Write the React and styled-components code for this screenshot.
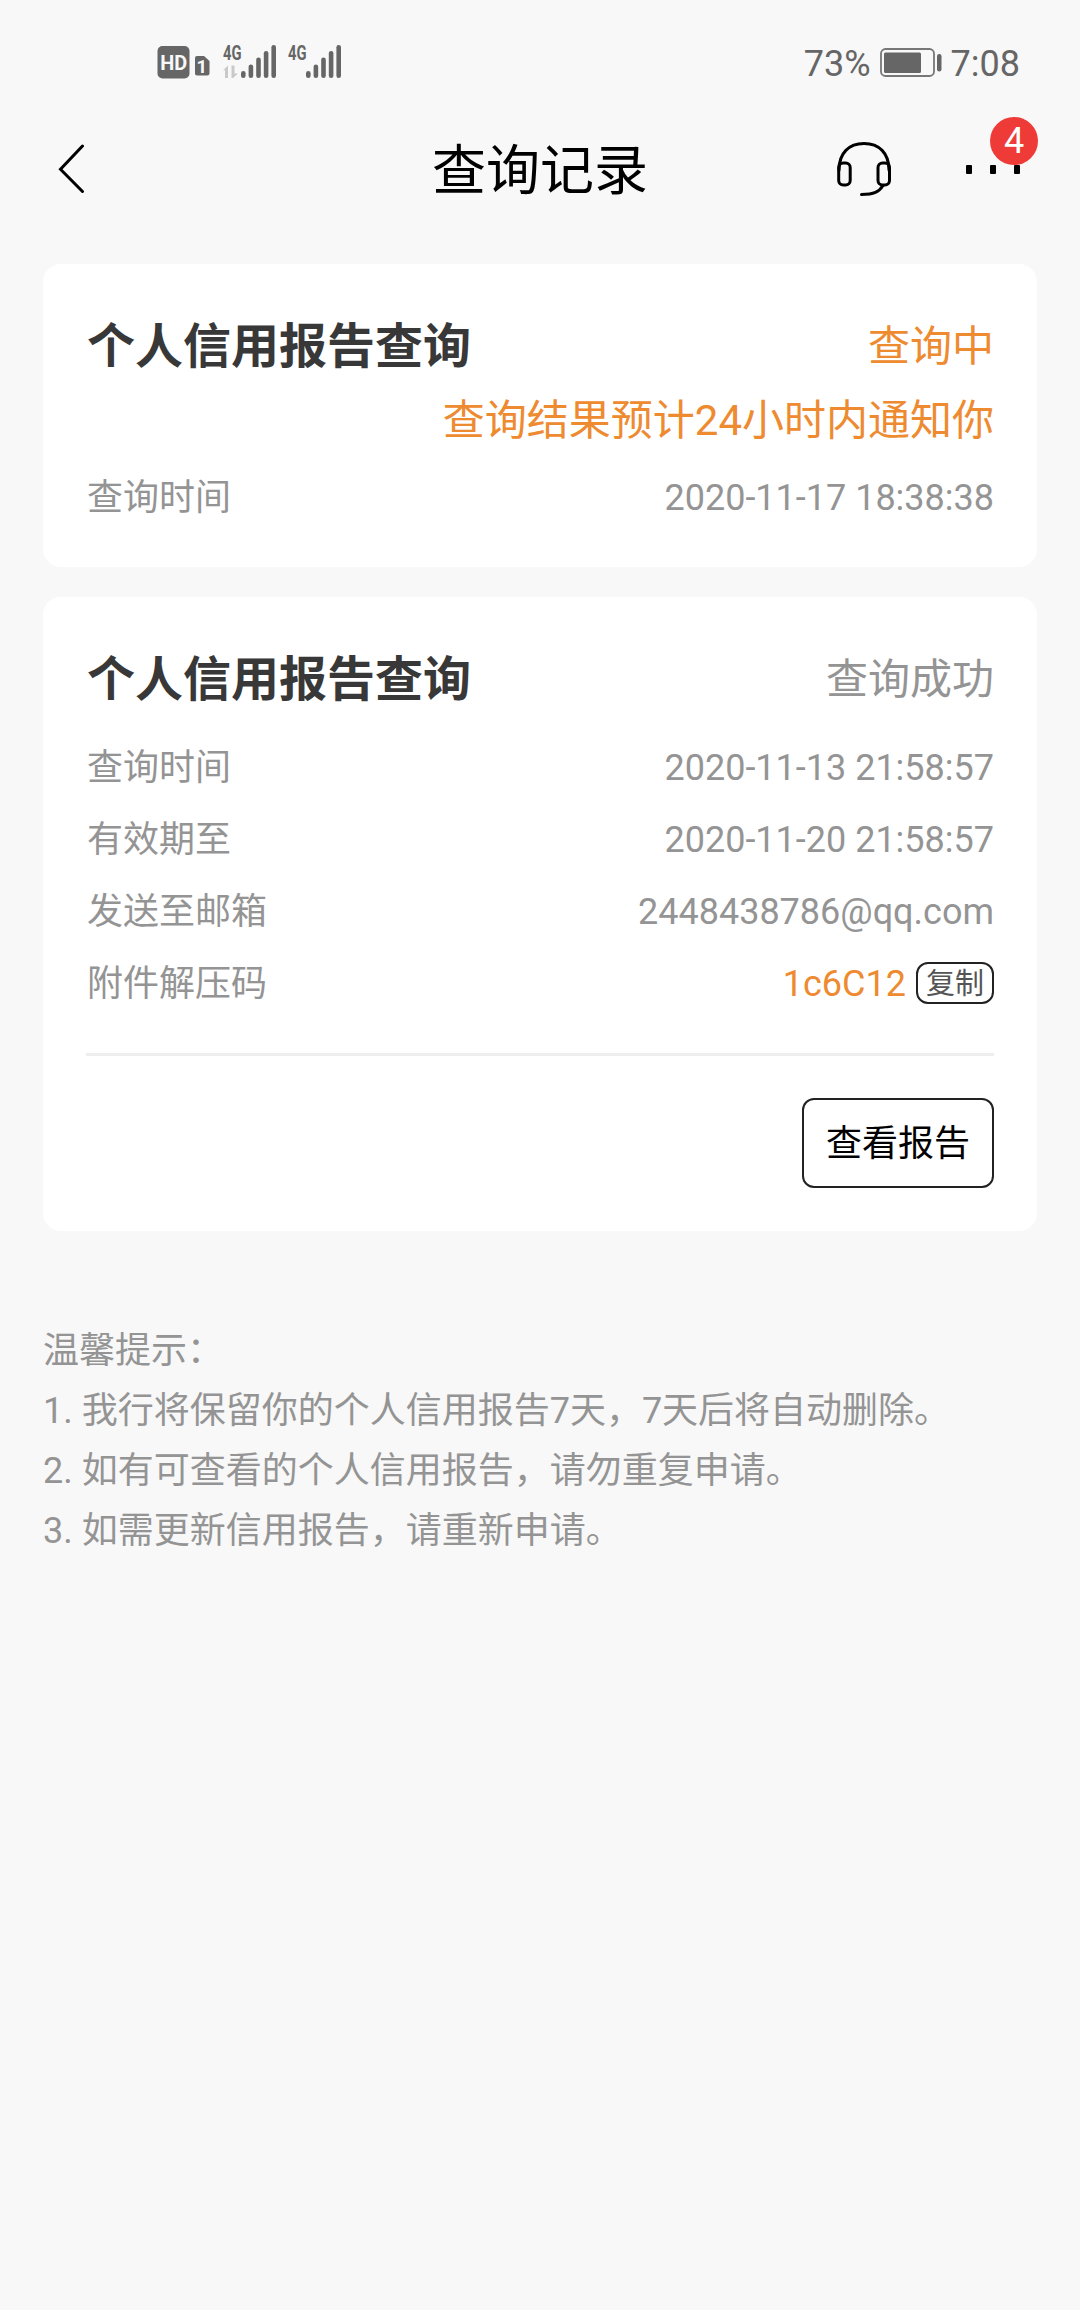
import React from 'react'
import styled, {createGlobalStyle} from 'styled-components';

const GlobalStyle = createGlobalStyle`
  body {
    margin: 0;
    background-color: #f8f8f8;
    font-family: Roboto, "Noto Sans CJK SC", sans-serif;
  }
`;

const Container = styled.div`
  min-height: 2310px;
  background-color: #f8f8f8;
  font-size: 36px;
  color: #949494;
`;

const StatusBar = styled.div`
  display: flex;
  align-items: center;
  justify-content: space-between;
  height: 84px;
  padding: 42px 60px 0 157px;
  box-sizing: border-box;
  color: #666;
`;

const StatusGroup = styled.div`
  display: flex;
  align-items: center;
  height: 42px;
  line-height: 42px;
`;

const StatusText = styled.span`
  padding-top: 2px;
`;

const BatteryIcon = styled.svg`
  margin: 0 8px 0 9px;
`;

const Navbar = styled.div`
  display: grid;
  grid-template-columns: 1fr auto 1fr;
  align-items: center;
  height: 170px;
  padding: 0 57px;
  box-sizing: border-box;
`;

const PageTitle = styled.h1`
  margin: 0;
  padding-top: 6px;
  font-size: 54px;
  font-weight: 400;
  line-height: 80px;
  color: #000;
`;

const Actions = styled.div`
  display: flex;
  align-items: center;
  justify-content: flex-end;
  gap: 74px;
`;

const More = styled.div`
  position: relative;
  display: flex;
  justify-content: space-between;
  width: 54px;
  margin-right: 3px;
`;

const Dot = styled.span`
  width: 6px;
  height: 9px;
  border-radius: 1px;
  background-color: #000;
`;

const Badge = styled.span`
  position: absolute;
  top: -48px;
  right: -18px;
  width: 48px;
  height: 48px;
  border-radius: 50%;
  background-color: #ee3b37;
  color: white;
  line-height: 49px;
  text-align: center;
`;

const List = styled.div`
  display: flex;
  flex-direction: column;
  gap: 30px;
  padding: 10px 43px 0;
`;

const Card = styled.div`
  padding: 45px 43px 43px;
  border-radius: 18px;
  background-color: #fff;
`;

const CardTop = styled.div`
  display: flex;
  align-items: center;
  justify-content: space-between;
  height: 76px;
  padding-left: 1px;
`;

const CardTitle = styled.h2`
  margin: 0;
  font-size: 48px;
  font-weight: 700;
  line-height: 76px;
  color: #383838;
`;

const Status = styled.span`
  font-size: 42px;
  line-height: 76px;
  color: ${props => props.$pending ? '#ee8a30' : '#949494'};
`;

const Notice = styled.div`
  height: 72px;
  font-size: 42px;
  line-height: 72px;
  text-align: right;
  color: #ee8a30;
`;

const Rows = styled.div`
  padding-top: ${props => props.$tight ? '5px' : '14px'};
  margin-bottom: ${props => props.$tight ? '-10px' : '33px'};
`;

const Row = styled.div`
  display: flex;
  align-items: center;
  justify-content: space-between;
  height: 72px;
  padding-left: 1px;
  line-height: 72px;
`;

const RowValue = styled.span`
  display: flex;
  align-items: center;
`;

const Code = styled.span`
  color: #ee8a30;
`;

const CopyButton = styled.button`
  width: 78px;
  height: 42px;
  margin: 0 0 2px 10px;
  padding: 2px 0 0;
  border: 2px solid #222;
  border-radius: 12px;
  background: none;
  color: #555;
  font-family: inherit;
  font-size: 29px;
  line-height: 36px;
`;

const Hr = styled.hr`
  height: 3px;
  margin: 0;
  border: none;
  background-color: #eee;
`;

const CardBottom = styled.div`
  display: flex;
  justify-content: flex-end;
  padding-top: 42px;
`;

const ReportButton = styled.button`
  width: 192px;
  height: 90px;
  padding: 2px 0 0;
  border: 2px solid #222;
  border-radius: 12px;
  background: none;
  color: #000;
  font-family: inherit;
  font-size: 36px;
  line-height: 84px;
`;

const Tips = styled.div`
  padding: 90px 43px 0;
`;

const Tip = styled.p`
  margin: 0;
  height: 60px;
  line-height: 60px;
`;

const records = [
    {
        id: 1,
        status: '查询中',
        pending: true,
        notice: '查询结果预计24小时内通知你',
        rows: [
            {label: '查询时间', value: '2020-11-17 18:38:38'},
        ],
    },
    {
        id: 2,
        status: '查询成功',
        rows: [
            {label: '查询时间', value: '2020-11-13 21:58:57'},
            {label: '有效期至', value: '2020-11-20 21:58:57'},
            {label: '发送至邮箱', value: '2448438786@qq.com'},
            {label: '附件解压码', code: '1c6C12'},
        ],
    },
];

const tips = [
    '温馨提示：',
    '1. 我行将保留你的个人信用报告7天，7天后将自动删除。',
    '2. 如有可查看的个人信用报告，请勿重复申请。',
    '3. 如需更新信用报告，请重新申请。',
];

const barTops = [29, 22.5, 15.5, 9, 3];

const Signal = ({x}) => (
    <g>
        <text x={x} y="17.5" fontSize="20" fontWeight="700" textLength="18.5" lengthAdjust="spacingAndGlyphs">4G</text>
        {barTops.map((top, i) => (
            <rect key={top} x={x + 18 + i * 7.6} y={top} width="4.6" height={36 - top} rx="2.3"/>
        ))}
    </g>
);

const Network = () => (
    <svg width="190" height="42" viewBox="0 0 190 42" fill="#666" fontFamily="Roboto, sans-serif">
        <rect x="0.5" y="4" width="32" height="32.5" rx="5"/>
        <text x="3.2" y="27.5" fontSize="20" fontWeight="700" fill="#f8f8f8" textLength="27" lengthAdjust="spacingAndGlyphs">HD</text>
        <path d="M40 14h7l5.500 5v12a2.500 2.500 0 0 1-2.500 2.500H40a2 2 0 0 1-2-2V16a2 2 0 0 1 2-2z"/>
        <text x="39.500" y="31" fontSize="18.5" fontWeight="700" fill="#f8f8f8">1</text>
        <path d="M66 28.500l5-5v12.500h-3v-8zM74.500 23.500h3v8h3.500l-5 4.500h-1.500z" fill="#c9c9c9"/>
        <Signal x={66}/>
        <Signal x={131}/>
    </svg>
);

const Battery = () => (
    <BatteryIcon width="63" height="30" viewBox="0 0 63 30">
        <rect x="1" y="1" width="53" height="27" rx="4.500" fill="none" stroke="#777" strokeWidth="1.800"/>
        <rect x="4" y="4.500" width="37" height="20.500" rx="1.500" fill="#666"/>
        <rect x="57" y="6" width="4.500" height="17.500" rx="2.200" fill="#666"/>
    </BatteryIcon>
);

const BackIcon = () => (
    <svg width="30" height="50" viewBox="0 0 30 50" fill="none" stroke="#000" strokeWidth="3" strokeLinecap="round">
        <path d="M25.500 2L3.500 25.300L25.500 47.500"/>
    </svg>
);

const HeadsetIcon = () => (
    <svg width="56" height="56" viewBox="0 0 56 56" fill="none" stroke="#000" strokeWidth="3" strokeLinecap="round">
        <path d="M3 29C3 12 13 2.500 28 2.500S53 12 53 29"/>
        <rect x="2.700" y="22" width="11.500" height="22" rx="4.500"/>
        <rect x="42" y="22" width="11.500" height="22" rx="4.500"/>
        <path d="M47 44.500C43 51 38 53.500 25.500 53.500"/>
    </svg>
);

const Record = ({item}) => (
    <Card>
        <CardTop>
            <CardTitle>个人信用报告查询</CardTitle>
            <Status $pending={item.pending}>{item.status}</Status>
        </CardTop>
        {item.notice && <Notice>{item.notice}</Notice>}
        <Rows $tight={item.pending}>
            {item.rows.map(row => (
                <Row key={row.label}>
                    <span>{row.label}</span>
                    <RowValue>
                        {row.value}
                        {row.code && <Code>{row.code}</Code>}
                        {row.code && <CopyButton>复制</CopyButton>}
                    </RowValue>
                </Row>
            ))}
        </Rows>
        {!item.pending && (
            <>
                <Hr/>
                <CardBottom>
                    <ReportButton>查看报告</ReportButton>
                </CardBottom>
            </>
        )}
    </Card>
);

const App = () => {
    return (
        <Container>
            <GlobalStyle/>
            <StatusBar>
                <StatusGroup>
                    <Network/>
                </StatusGroup>
                <StatusGroup>
                    <StatusText>73%</StatusText>
                    <Battery/>
                    <StatusText>7:08</StatusText>
                </StatusGroup>
            </StatusBar>
            <Navbar>
                <BackIcon/>
                <PageTitle>查询记录</PageTitle>
                <Actions>
                    <HeadsetIcon/>
                    <More>
                        <Dot/>
                        <Dot/>
                        <Dot/>
                        <Badge>4</Badge>
                    </More>
                </Actions>
            </Navbar>
            <List>
                {records.map(item => (
                    <Record item={item} key={item.id}/>
                ))}
            </List>
            <Tips>
                {tips.map(tip => (
                    <Tip key={tip}>{tip}</Tip>
                ))}
            </Tips>
        </Container>
    )
};

export default App;
